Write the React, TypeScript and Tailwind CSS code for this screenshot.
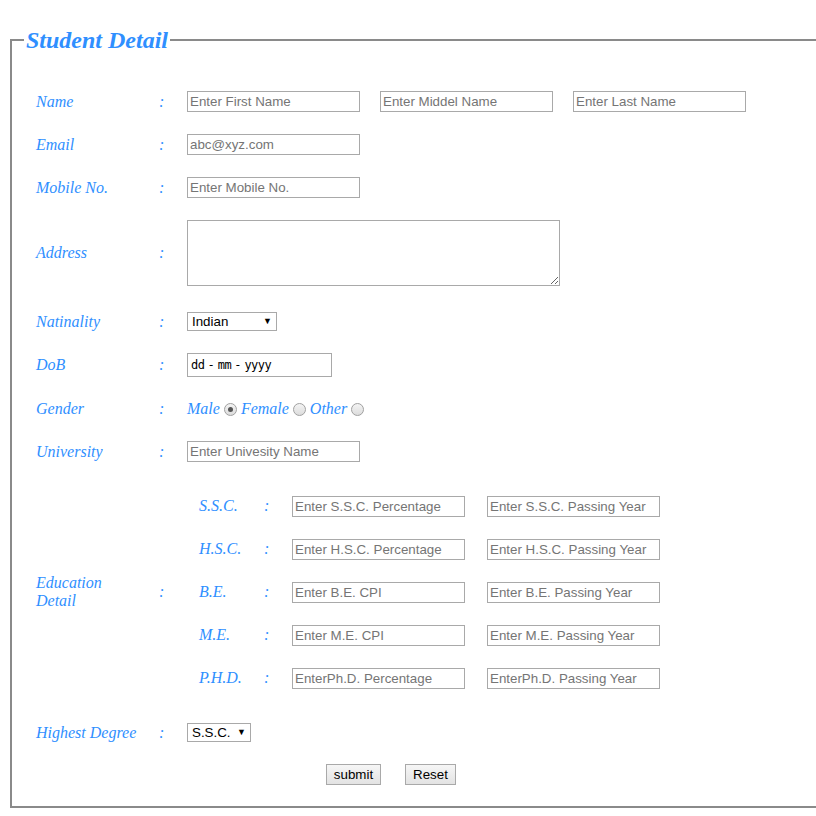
const labelCls =
  "text-[16px] italic text-[#2f8fff] [font-family:'Liberation_Serif',serif]";
const inputCls =
  "h-[21px] w-[173px] border border-[#a9a9a9] bg-white px-[2px] text-[13.33px] text-black outline-none placeholder:text-[#757575] [font-family:'Liberation_Sans',Arial,sans-serif]";

function Label({ text }: { text: string }) {
  return (
    <>
      <div className={`w-[123px] shrink-0 ${labelCls}`}>{text}</div>
      <div className={`w-[28px] shrink-0 ${labelCls}`}>:</div>
    </>
  );
}

function Radio({ checked }: { checked?: boolean }) {
  return (
    <span className="mx-[4px] inline-flex h-[13px] w-[13px] items-center justify-center rounded-full border border-[#a0a0a0] bg-gradient-to-b from-[#f4f4f4] to-[#dcdcdc]">
      {checked && <span className="h-[5px] w-[5px] rounded-full bg-[#555]" />}
    </span>
  );
}

function FakeSelect({ value, width }: { value: string; width: string }) {
  return (
    <div
      className={`flex h-[19px] ${width} items-center justify-between border border-[#a9a9a9] bg-white pl-[4px] pr-[4px] text-[13.33px] text-black [font-family:'Liberation_Sans',Arial,sans-serif]`}
    >
      <span>{value}</span>
      <span className="text-[9px] leading-none">▼</span>
    </div>
  );
}

const education = [
  ["S.S.C.", "Enter S.S.C. Percentage", "Enter S.S.C. Passing Year"],
  ["H.S.C.", "Enter H.S.C. Percentage", "Enter H.S.C. Passing Year"],
  ["B.E.", "Enter B.E. CPI", "Enter B.E. Passing Year"],
  ["M.E.", "Enter M.E. CPI", "Enter M.E. Passing Year"],
  ["P.H.D.", "EnterPh.D. Percentage", "EnterPh.D. Passing Year"],
];

export default function App() {
  return (
    <div className="h-[816px] w-[816px] overflow-hidden bg-white">
      <fieldset className="ml-[10px] mt-[26px] w-[830px] border-2 border-[#8a8a8a] pb-[7px] pl-[24px] pt-[26px]">
        <legend className="ml-[-12px] px-[2px] text-[24px] font-bold italic leading-[28px] text-[#2f8fff] [font-family:'Liberation_Serif',serif]">
          Student Detail
        </legend>

        <div className="flex h-[43px] items-center">
          <Label text="Name" />
          <div className="flex gap-[20px]">
            <input className={inputCls} placeholder="Enter First Name" />
            <input className={inputCls} placeholder="Enter Middel Name" />
            <input className={inputCls} placeholder="Enter Last Name" />
          </div>
        </div>

        <div className="flex h-[43px] items-center">
          <Label text="Email" />
          <input className={inputCls} placeholder="abc@xyz.com" />
        </div>

        <div className="flex h-[43px] items-center">
          <Label text="Mobile No." />
          <input className={inputCls} placeholder="Enter Mobile No." />
        </div>

        <div className="flex h-[88px] items-center">
          <Label text="Address" />
          <textarea className="h-[66px] w-[373px] border border-[#a9a9a9] bg-white outline-none" />
        </div>

        <div className="flex h-[49px] items-center">
          <Label text="Natinality" />
          <FakeSelect value="Indian" width="w-[90px]" />
        </div>

        <div className="flex h-[38px] items-center">
          <Label text="DoB" />
          <div className="flex h-[24px] w-[145px] items-center gap-[3px] border border-[#a9a9a9] bg-white pl-[3px] text-[12px] text-black [font-family:'DejaVu_Sans_Mono',monospace]">
            <span className="tracking-[-0.5px]">dd</span>
            <span>-</span>
            <span className="tracking-[-0.5px]">mm</span>
            <span>-</span>
            <span className="tracking-[-0.5px]">yyyy</span>
          </div>
        </div>

        <div className="flex h-[50px] items-center">
          <Label text="Gender" />
          <div className={`flex items-center ${labelCls}`}>
            <span>Male</span>
            <Radio checked />
            <span>Female</span>
            <Radio />
            <span>Other</span>
            <Radio />
          </div>
        </div>

        <div className="flex h-[35px] items-center">
          <Label text="University" />
          <input className={inputCls} placeholder="Enter Univesity Name" />
        </div>

        <div className="flex h-[246px] items-center">
          <div className={`w-[123px] shrink-0 leading-[18px] ${labelCls}`}>
            Education
            <br />
            Detail
          </div>
          <div className={`w-[28px] shrink-0 ${labelCls}`}>:</div>
          <div className="flex flex-col pl-[12px]">
            {education.map(([name, a, b]) => (
              <div key={name} className="flex h-[43px] items-center">
                <div className={`w-[65px] shrink-0 ${labelCls}`}>{name}</div>
                <div className={`w-[28px] shrink-0 ${labelCls}`}>:</div>
                <div className="flex gap-[22px]">
                  <input className={inputCls} placeholder={a} />
                  <input className={inputCls} placeholder={b} />
                </div>
              </div>
            ))}
          </div>
        </div>

        <div className="flex h-[35px] items-center">
          <Label text="Highest Degree" />
          <FakeSelect value="S.S.C." width="w-[64px]" />
        </div>

        <div className="flex h-[49px] items-center gap-[24px] pl-[290px]">
          <button className="h-[21px] w-[55px] border border-[#a9a9a9] bg-gradient-to-b from-[#f6f6f6] to-[#e3e3e3] text-[13.33px] text-black [font-family:'Liberation_Sans',Arial,sans-serif]">
            submit
          </button>
          <button className="h-[21px] w-[51px] border border-[#a9a9a9] bg-gradient-to-b from-[#f6f6f6] to-[#e3e3e3] text-[13.33px] text-black [font-family:'Liberation_Sans',Arial,sans-serif]">
            Reset
          </button>
        </div>
      </fieldset>
    </div>
  );
}
